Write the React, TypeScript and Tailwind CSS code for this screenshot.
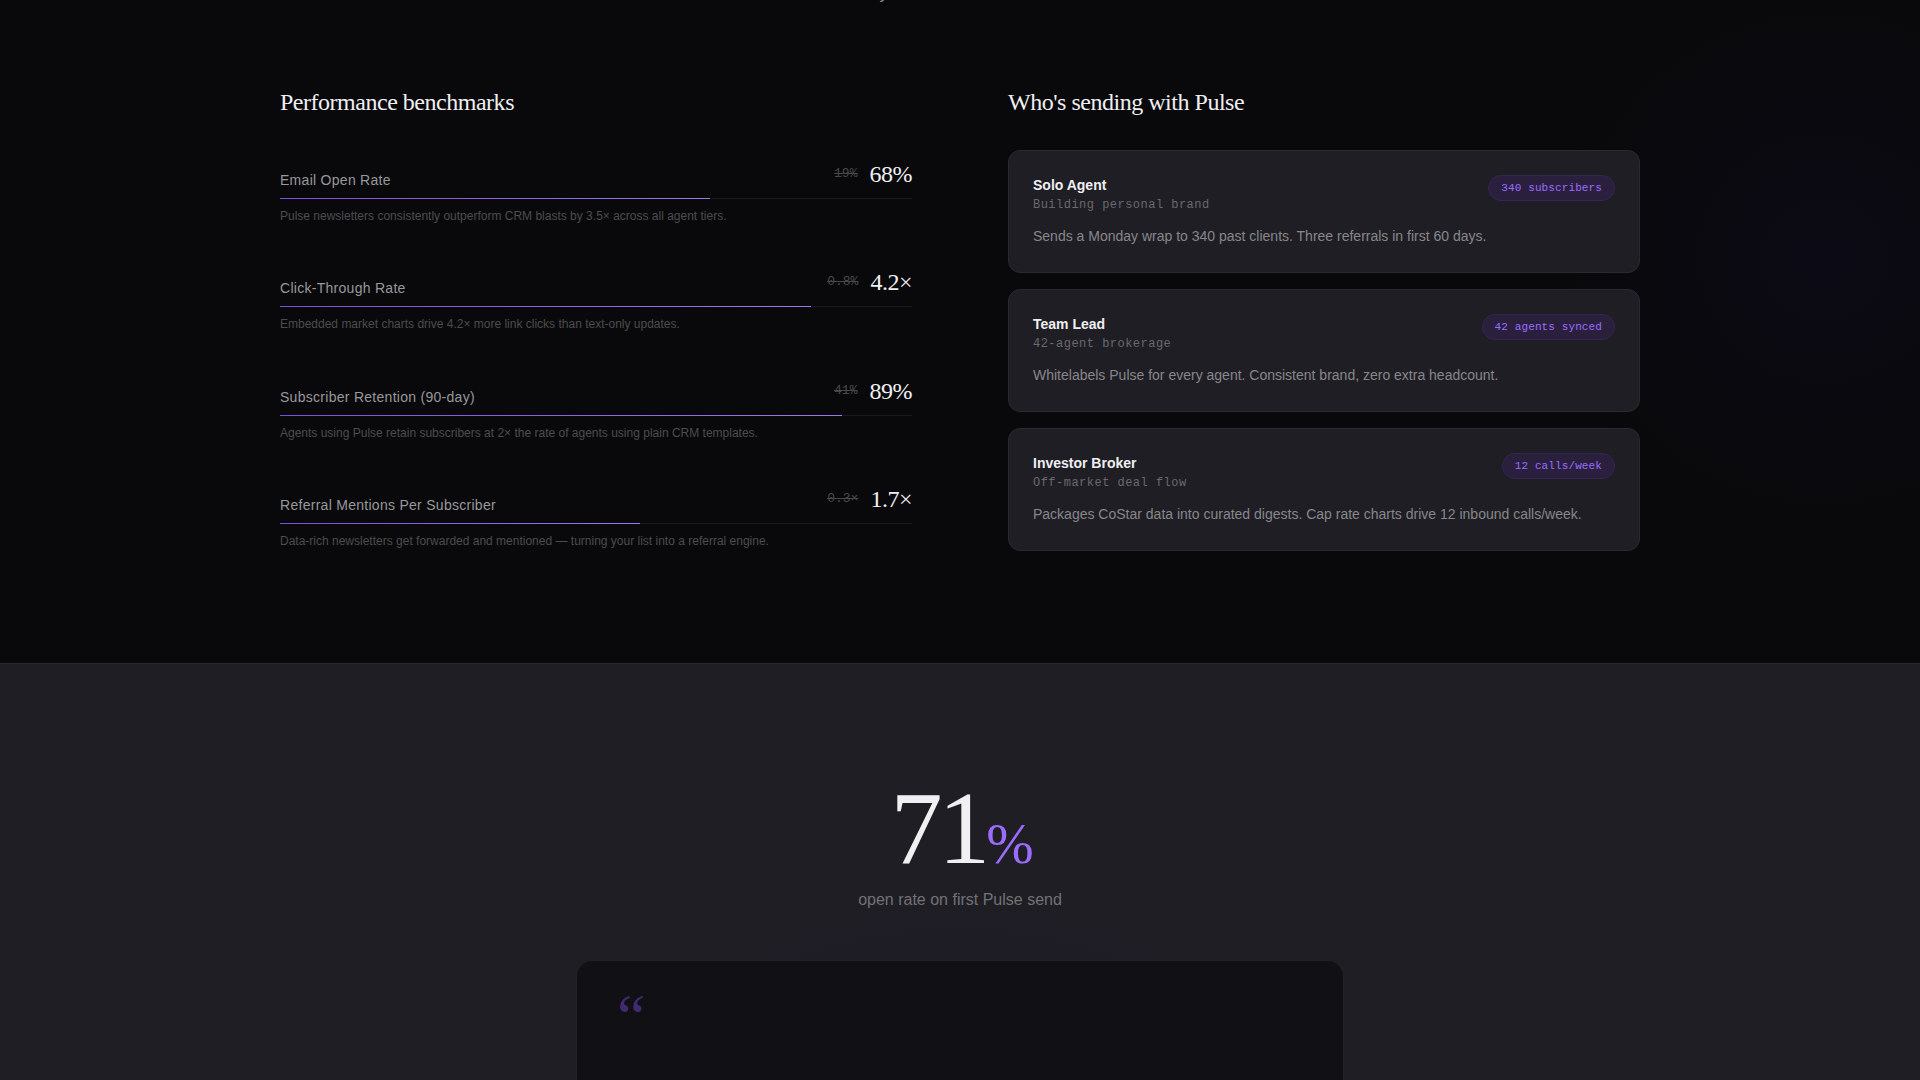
const METRICS = [
  {
    label: "Email Open Rate",
    before: "19%",
    after: "68%",
    fill: 68,
    note: "Pulse newsletters consistently outperform CRM blasts by 3.5× across all agent tiers.",
  },
  {
    label: "Click-Through Rate",
    before: "0.8%",
    after: "4.2×",
    fill: 84,
    note: "Embedded market charts drive 4.2× more link clicks than text-only updates.",
  },
  {
    label: "Subscriber Retention (90-day)",
    before: "41%",
    after: "89%",
    fill: 89,
    note: "Agents using Pulse retain subscribers at 2× the rate of agents using plain CRM templates.",
  },
  {
    label: "Referral Mentions Per Subscriber",
    before: "0.3×",
    after: "1.7×",
    fill: 57,
    note: "Data-rich newsletters get forwarded and mentioned — turning your list into a referral engine.",
  },
];

const PROFILES = [
  {
    name: "Solo Agent",
    role: "Building personal brand",
    badge: "340 subscribers",
    text: "Sends a Monday wrap to 340 past clients. Three referrals in first 60 days.",
  },
  {
    name: "Team Lead",
    role: "42-agent brokerage",
    badge: "42 agents synced",
    text: "Whitelabels Pulse for every agent. Consistent brand, zero extra headcount.",
  },
  {
    name: "Investor Broker",
    role: "Off-market deal flow",
    badge: "12 calls/week",
    text: "Packages CoStar data into curated digests. Cap rate charts drive 12 inbound calls/week.",
  },
];

type Metric = (typeof METRICS)[number];
type Profile = (typeof PROFILES)[number];

function MetricRow({ label, before, after, fill, note }: Metric) {
  return (
    <li>
      <div className="flex items-end justify-between">
        <span className="text-sm tracking-[0.02em] text-[#98989c]">{label}</span>
        <div className="flex items-center gap-3">
          <s className="font-['Liberation_Mono',monospace] text-[13px] leading-5 text-[#48484c]">{before}</s>
          <span className="font-['Liberation_Serif',serif] text-2xl tracking-[-0.02em] text-[#f0eff2]">{after}</span>
        </div>
      </div>
      <div className="mt-2 h-px bg-[#1a1a1d]">
        <div className="h-full bg-linear-to-r from-[#7c4fd8] to-[#9b78ee]" style={{ width: `${fill}%` }} />
      </div>
      <p className="mt-2 text-xs leading-[19px] text-[#4c4c4f]">{note}</p>
    </li>
  );
}

function ProfileCard({ name, role, badge, text }: Profile) {
  return (
    <li className="rounded-xl border border-[#2a2a2e] bg-[#1f1e24] p-6">
      <div className="flex items-start justify-between">
        <div>
          <h3 className="text-sm font-bold text-[#f0eff2]">{name}</h3>
          <p className="font-['Liberation_Mono',monospace] text-xs leading-[21px] tracking-[0.04em] text-[#69696e]">
            {role}
          </p>
        </div>
        <span className="rounded-full border border-[#33264f] bg-[#2a203d] px-3 py-1 font-['Liberation_Mono',monospace] text-[11px] leading-4 tracking-[0.01em] text-[#9b6dff]">
          {badge}
        </span>
      </div>
      <p className="mt-2 text-sm leading-6 text-[#87878b]">{text}</p>
    </li>
  );
}

export default function App() {
  return (
    <main className="flex h-screen flex-col overflow-hidden bg-[#09090b] font-['Liberation_Sans',Arial,sans-serif]">
      <section className="relative px-10 pb-28">
        <div className="pointer-events-none absolute inset-0 bg-[radial-gradient(circle_340px_at_95%_39%,#0c0a14,#0a090e_50%,transparent_80%)]" />
        {/* tail of the intro line, scrolled past the top edge */}
        <div className="flex h-0.5 items-end justify-center overflow-hidden pr-38">
          <span className="text-lg leading-5 text-[#87878b]">y</span>
        </div>
        <div className="relative mx-auto mt-21 grid max-w-[1360px] grid-cols-2 gap-24">
          <div className="flex flex-col">
            <h2 className="font-['Liberation_Serif',serif] text-2xl tracking-[-0.02em] text-[#f0eff2]">
              Performance benchmarks
            </h2>
            <ul className="mt-8 flex flex-1 flex-col justify-between pt-2">
              {METRICS.map((metric) => (
                <MetricRow key={metric.label} {...metric} />
              ))}
            </ul>
          </div>
          <div>
            <h2 className="font-['Liberation_Serif',serif] text-2xl tracking-[-0.02em] text-[#f0eff2]">
              Who's sending with Pulse
            </h2>
            <ul className="mt-8 flex flex-col gap-4">
              {PROFILES.map((profile) => (
                <ProfileCard key={profile.name} {...profile} />
              ))}
            </ul>
          </div>
        </div>
      </section>

      <section className="relative flex flex-1 flex-col border-t border-[#2a2a2e] bg-[#1f1e24] px-10 pt-28">
        <div className="pointer-events-none absolute inset-0 bg-[radial-gradient(ellipse_360px_200px_at_50%_100%,#1b1b28,transparent)]" />
        <div className="relative text-center">
          <p className="font-['Liberation_Serif',serif] text-[104px] leading-none tracking-[-0.04em] text-[#f0eff2]">
            71<span className="text-[57px] leading-none text-[#9b6dff]">%</span>
          </p>
          <p className="mt-2 text-base text-[#727276]">open rate on first Pulse send</p>
        </div>
        <blockquote className="relative mx-auto mt-12 w-full max-w-3xl flex-1 rounded-t-2xl border border-b-0 border-[#222126] bg-[#111014] px-10 pt-6">
          <span className="font-['Liberation_Serif',serif] text-[64px] leading-none text-[#402a70]">“</span>
        </blockquote>
      </section>
    </main>
  );
}
